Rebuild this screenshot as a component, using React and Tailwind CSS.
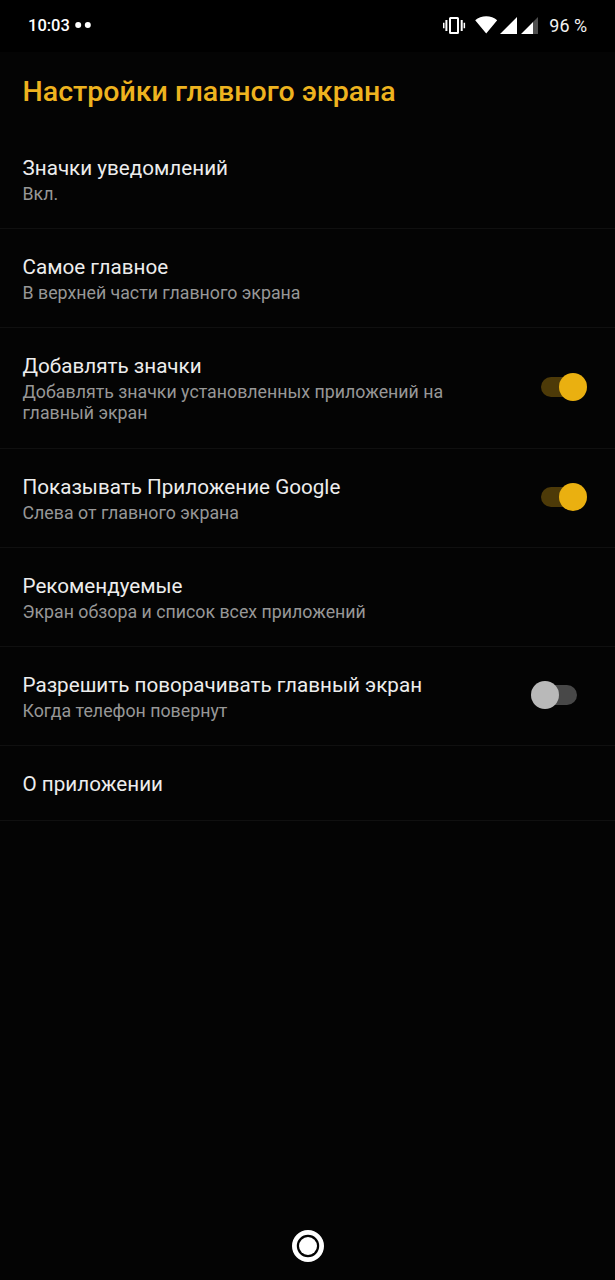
import React from 'react';

const items = [
  { title: 'Значки уведомлений', lines: ['Вкл.'] },
  { title: 'Самое главное', lines: ['В верхней части главного экрана'] },
  { title: 'Добавлять значки', lines: ['Добавлять значки установленных приложений на', 'главный экран'], on: true },
  { title: 'Показывать Приложение Google', lines: ['Слева от главного экрана'], on: true },
  { title: 'Рекомендуемые', lines: ['Экран обзора и список всех приложений'] },
  { title: 'Разрешить поворачивать главный экран', lines: ['Когда телефон повернут'], on: false },
  { title: 'О приложении', lines: [] },
];

const Switch = ({ on }) => (
  <span className={`-mt-[5px] flex h-7 w-[46px] shrink-0 items-center ${on ? '' : 'mr-[10px]'}`}>
    <span className={`flex h-5 items-center rounded-full ${on ? 'w-9 justify-end bg-[#4d3a08]' : 'ml-[10px] w-9 justify-start bg-[#484848]'}`}>
      <span className={`size-7 shrink-0 rounded-full ${on ? '-mr-[10px] bg-[#eab010]' : '-ml-[10px] bg-[#b9b9b9]'}`} />
    </span>
  </span>
);

const StatusBar = () => (
  <header className="flex h-[52px] items-center justify-between bg-black px-7 text-white">
    <div className="flex items-center gap-1">
      <span className="text-[16.5px] leading-5 font-medium">10:03</span>
      <svg width="18" height="8" viewBox="0 0 18 8" fill="currentColor" className="-mt-[2px]">
        <circle cx="4.2" cy="4" r="3" />
        <circle cx="13.8" cy="4" r="3" />
      </svg>
    </div>
    <div className="flex items-center">
      <svg width="96" height="24" viewBox="0 0 96 24" fill="currentColor">
        <path d="M0 8.7h1.5v5.6H0zM2.4 6h2v11h-2zM17.7 6h2v11h-2zM20.6 8.7h1.5v5.6h-1.5z" />
        <rect x="7" y="4" width="8" height="15" rx="0.5" fill="none" stroke="currentColor" strokeWidth="2" />
        <path d="M32.2 6.2C38 1 48.5 1 54.2 6.2L43.2 19.5zM57 20L74 3v17zM78 20L90 8v12z" />
        <path d="M90 8L95 3v17h-5z" fill="#4e4e4e" />
      </svg>
      <span className="ml-[10px] text-[17.9px] leading-5 text-[#f2f2f2]">96 %</span>
    </div>
  </header>
);

export default function App() {
  return (
    <div className="flex h-[1280px] w-[615px] flex-col bg-[#040404] font-['Roboto',sans-serif]">
      <StatusBar />
      <h1 className="flex h-[78px] items-center pt-[2px] pl-[22.5px] text-[28.55px] font-medium text-[#eeb31f]">Настройки главного экрана</h1>
      <main>
        {items.map((item) => (
          <section key={item.title} className="flex items-center justify-between border-b border-[#101010] pt-[25px] pr-7 pb-[22px] pl-[22.5px]">
            <div className={item.lines.length ? 'pb-[1.2px]' : ''}>
              <h2 className="text-[20.65px] leading-[27px] text-[#ededed]">{item.title}</h2>
              {item.lines.length > 0 && (
                <div className="mt-[2px] text-[17.77px] leading-[21px] text-[#979797]">
                  {item.lines.map((line) => (
                    <p key={line}>{line}</p>
                  ))}
                </div>
              )}
            </div>
            {item.on !== undefined && <Switch on={item.on} />}
          </section>
        ))}
      </main>
      <footer className="mt-auto flex h-[68px] items-center justify-center">
        <svg width="34" height="34" viewBox="0 0 34 34">
          <circle cx="17" cy="17" r="13.6" fill="none" stroke="white" strokeWidth="4.8" />
          <circle cx="17" cy="17" r="9" fill="white" />
        </svg>
      </footer>
    </div>
  );
}
